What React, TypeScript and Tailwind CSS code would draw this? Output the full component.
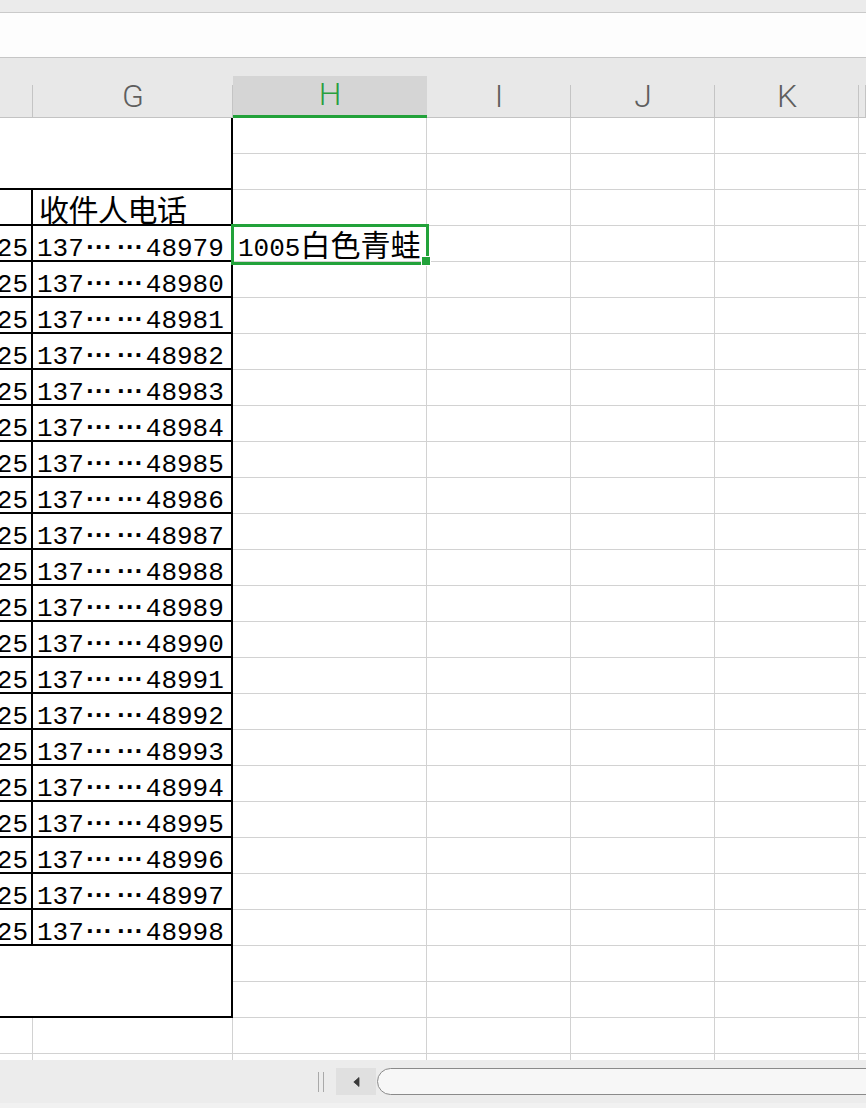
import React from "react";

const MONO = "font-['Liberation_Mono',monospace] text-[26px] leading-[20px]";
const CJK = "font-['Noto_Sans_CJK_SC',sans-serif] text-[30px] leading-[30px]";

function Dots() {
  return (
    <span className="inline-block w-[31px] text-center font-['Liberation_Sans',sans-serif] font-bold text-[26px] leading-[20px]">
      ···
    </span>
  );
}

function Phone({ n }: { n: number }) {
  return (
    <span className={`${MONO} whitespace-nowrap text-black`}>
      <span>137</span>
      <Dots />
      <Dots />
      <span>{n}</span>
    </span>
  );
}

function HeaderCell({
  w,
  label,
  active,
  grow,
}: {
  w?: string;
  label?: string;
  active?: boolean;
  grow?: boolean;
}) {
  if (active) {
    return (
      <div
        className={`${w} shrink-0 h-[42px] bg-[#d5d5d5] border-b-[3px] border-[#22a23a] flex items-end justify-center pb-[5px]`}
      >
        <span className="font-['Roboto',sans-serif] font-light text-[32px] leading-[32px] text-[#2a9f3e]">
          {label}
        </span>
      </div>
    );
  }
  return (
    <div
      className={`${grow ? "flex-1" : w} shrink-0 h-full relative border-b border-[#c3c3c3] flex items-end justify-center pb-[5px]`}
    >
      {label && (
        <span className="font-['Roboto',sans-serif] font-light text-[32px] leading-[32px] text-[#5e5e5e]">
          {label}
        </span>
      )}
      <span className="absolute right-0 top-[27px] bottom-0 w-px bg-[#c4c4c4]" />
    </div>
  );
}

function LeftRow({ f, children, pl = "pl-[4px]" }: { f?: string; children?: React.ReactNode; pl?: string }) {
  return (
    <div className="h-[36px] shrink-0 flex border-b-2 border-r-2 border-black">
      <div className="w-[33px] shrink-0 border-r-2 border-black overflow-hidden flex items-end justify-end pr-[3px] pb-[1px]">
        {f && <span className={`${MONO} whitespace-nowrap`}>{f}</span>}
      </div>
      <div className={`flex-1 min-w-0 flex items-end ${pl} pb-[1px]`}>
        {children}
      </div>
    </div>
  );
}

function RightRow({ idx, h = "h-[36px]", last }: { idx: number; h?: string; last?: boolean }) {
  const g = "border-[#d2d2d2]";
  const selected = idx === 3;
  return (
    <div className={`${h} shrink-0 flex ${last ? "" : `border-b ${g}`}`}>
      <div className={`w-[194px] shrink-0 border-r ${g} relative flex items-end pl-[5px] pb-[2px]`}>
        {selected && (
          <>
            <span className={`${MONO} whitespace-nowrap text-black`}>
              <span>1005</span>
              <span className={CJK}>白色青蛙</span>
            </span>
            <div className="absolute -left-[2px] -top-[2px] w-[198px] h-[41px] border-[3px] border-[#22a23a] z-10 pointer-events-none" />
            <div className="absolute left-[188px] top-[30px] w-[10px] h-[10px] bg-[#22a23a] border border-white z-20" />
          </>
        )}
      </div>
      <div className={`w-[144px] shrink-0 border-r ${g}`} />
      <div className={`w-[144px] shrink-0 border-r ${g}`} />
      <div className={`w-[144px] shrink-0 border-r ${g}`} />
      <div className="flex-1" />
    </div>
  );
}

export default function App() {
  const nums = Array.from({ length: 20 }, (_, i) => 48979 + i);
  const gray = "border-[#d2d2d2]";
  return (
    <div className="w-[866px] h-[1108px] overflow-hidden bg-white flex flex-col">
      {/* top strip */}
      <div className="h-[13px] shrink-0 bg-[#ebebeb] border-b border-[#cacaca]" />
      {/* formula area */}
      <div className="h-[45px] shrink-0 bg-[#fdfdfd] border-b border-[#c6c6c6]" />
      {/* column header */}
      <div className="h-[60px] shrink-0 bg-[#e8e8e8] flex items-end">
        <HeaderCell w="w-[33px]" />
        <HeaderCell w="w-[200px]" label="G" />
        <HeaderCell w="w-[194px]" label="H" active />
        <HeaderCell w="w-[144px]" label="I" />
        <HeaderCell w="w-[144px]" label="J" />
        <HeaderCell w="w-[144px]" label="K" />
        <HeaderCell grow />
      </div>

      {/* grid */}
      <div className="h-[942px] shrink-0 flex">
        {/* F + G bordered table */}
        <div className="w-[233px] shrink-0 flex flex-col">
          <div className="h-[72px] shrink-0 border-r-2 border-b-2 border-black" />
          <LeftRow pl="pl-[6px]">
            <span className={`${CJK} whitespace-nowrap tracking-[-0.5px]`}>收件人电话</span>
          </LeftRow>
          {nums.map((n) => (
            <LeftRow key={n} f="1025">
              <Phone n={n} />
            </LeftRow>
          ))}
          <div className="h-[72px] shrink-0 border-r-2 border-b-2 border-black" />
          <div className={`h-[36px] shrink-0 flex border-b ${gray}`}>
            <div className={`w-[33px] shrink-0 border-r ${gray}`} />
            <div className={`flex-1 border-r ${gray}`} />
          </div>
          <div className="flex-1 flex">
            <div className={`w-[33px] shrink-0 border-r ${gray}`} />
            <div className={`flex-1 border-r ${gray}`} />
          </div>
        </div>
        {/* H.. columns */}
        <div className="flex-1 flex flex-col">
          {Array.from({ length: 26 }, (_, i) => (
            <RightRow key={i} idx={i} />
          ))}
          <RightRow idx={-1} h="flex-1" last />
        </div>
      </div>

      {/* bottom scroll bar */}
      <div className="flex-1 bg-[#ececec] flex items-start pt-[8px] border-b-[5px] border-[#f1f1f1]">
        <div className="ml-[318px] mt-[4px] w-[6px] h-[20px] border-l border-r border-[#a9a9a9]" />
        <div className="ml-[12px] w-[40px] h-[27px] bg-[#e0e0e0] flex items-center justify-center">
          <svg width="7" height="10" viewBox="0 0 7 10">
            <path d="M6 0.5 L0.8 5 L6 9.5 Z" fill="#3a3a3a" stroke="#3a3a3a" strokeWidth="0.8" strokeLinejoin="round" />
          </svg>
        </div>
        <div className="ml-[1px] flex-1 mr-[-30px] h-[27px] rounded-full border border-[#8a8a8a] bg-[#f7f7f7]" />
      </div>
    </div>
  );
}
